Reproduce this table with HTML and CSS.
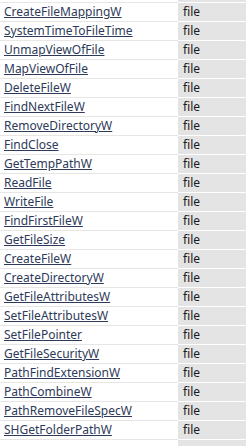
FILE: index.html
```html
<!DOCTYPE html>
<html>
<head>
<meta charset="utf-8">
<link rel="stylesheet" href="styles.css">
</head>
<body>
<div class="view">
<table class="grid">
<tbody>
<tr><td class="name"><a href="#">VirtualAlloc</a></td><td class="cat">memory</td></tr>
<tr><td class="name"><a href="#">CreateFileMappingW</a></td><td class="cat">file</td></tr>
<tr><td class="name"><a href="#">SystemTimeToFileTime</a></td><td class="cat">file</td></tr>
<tr><td class="name"><a href="#">UnmapViewOfFile</a></td><td class="cat">file</td></tr>
<tr><td class="name"><a href="#">MapViewOfFile</a></td><td class="cat">file</td></tr>
<tr><td class="name"><a href="#">DeleteFileW</a></td><td class="cat">file</td></tr>
<tr><td class="name"><a href="#">FindNextFileW</a></td><td class="cat">file</td></tr>
<tr><td class="name"><a href="#">RemoveDirectoryW</a></td><td class="cat">file</td></tr>
<tr><td class="name"><a href="#">FindClose</a></td><td class="cat">file</td></tr>
<tr><td class="name"><a href="#">GetTempPathW</a></td><td class="cat">file</td></tr>
<tr><td class="name"><a href="#">ReadFile</a></td><td class="cat">file</td></tr>
<tr><td class="name"><a href="#">WriteFile</a></td><td class="cat">file</td></tr>
<tr><td class="name"><a href="#">FindFirstFileW</a></td><td class="cat">file</td></tr>
<tr><td class="name"><a href="#">GetFileSize</a></td><td class="cat">file</td></tr>
<tr><td class="name"><a href="#">CreateFileW</a></td><td class="cat">file</td></tr>
<tr><td class="name"><a href="#">CreateDirectoryW</a></td><td class="cat">file</td></tr>
<tr><td class="name"><a href="#">GetFileAttributesW</a></td><td class="cat">file</td></tr>
<tr><td class="name"><a href="#">SetFileAttributesW</a></td><td class="cat">file</td></tr>
<tr><td class="name"><a href="#">SetFilePointer</a></td><td class="cat">file</td></tr>
<tr><td class="name"><a href="#">GetFileSecurityW</a></td><td class="cat">file</td></tr>
<tr><td class="name"><a href="#">PathFindExtensionW</a></td><td class="cat">file</td></tr>
<tr><td class="name"><a href="#">PathCombineW</a></td><td class="cat">file</td></tr>
<tr><td class="name"><a href="#">PathRemoveFileSpecW</a></td><td class="cat">file</td></tr>
<tr><td class="name"><a href="#">SHGetFolderPathW</a></td><td class="cat">file</td></tr>
<tr><td class="name"></td><td class="cat"></td></tr>
</tbody>
</table>
</div>
</body>
</html>
```

FILE: styles.css
```css
html, body {
  margin: 0;
  padding: 0;
  background: #ffffff;
  overflow: hidden;
}
.view {
  width: 246px;
  height: 446px;
  overflow: hidden;
}
.grid {
  margin-top: -16px;
  width: 246px;
  border-collapse: collapse;
  table-layout: fixed;
  font-family: "Noto Sans", "Open Sans", sans-serif;
  font-size: 12px;
}
.grid td {
  height: 18px;
  padding: 0 0 0 4px;
  line-height: 18px;
  white-space: nowrap;
  overflow: hidden;
  vertical-align: middle;
}
.grid .name {
  width: 173px;
  border-bottom: 1px solid #e6e6e6;
  border-right: 1px solid #ffffff;
}
.grid .cat {
  background: #e4e4e4;
  color: #1a1a1a;
  padding-left: 5px;
  border-bottom: 1px solid #ffffff;
}
.grid a {
  color: #2e3a59;
  text-decoration: underline;
}
```
